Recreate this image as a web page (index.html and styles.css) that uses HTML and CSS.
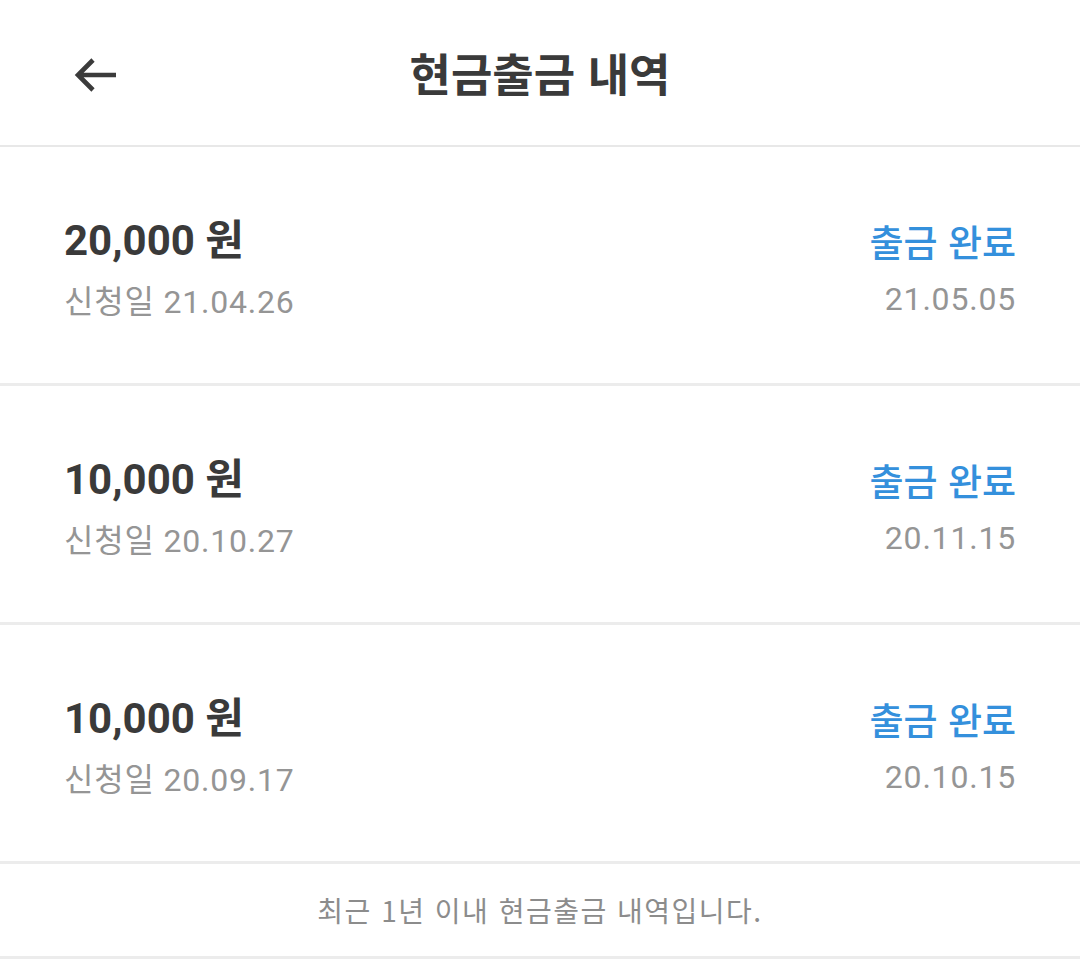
FILE: index.html
```html
<!DOCTYPE html>
<html lang="ko">
<head>
<meta charset="utf-8">
<title>현금출금 내역</title>
<link rel="stylesheet" href="styles.css">
</head>
<body>
<div class="page">
  <header class="topbar">
    <div class="back">
      <svg class="back-icon" width="44" height="34" viewBox="0 0 44 34">
        <path d="M43 17H5M20 2L5 17l15 15" fill="none" stroke="#3b3b3b" stroke-width="4.6" stroke-linecap="butt" stroke-linejoin="miter"/>
      </svg>
    </div>
    <h1 class="title">현금출금 내역</h1>
    <div class="spacer"></div>
  </header>

  <ul class="list">
    <li class="row">
      <div class="left">
        <div class="amount">20,000 원</div>
        <div class="sub">신청일 21.04.26</div>
      </div>
      <div class="right">
        <div class="status">출금 완료</div>
        <div class="date">21.05.05</div>
      </div>
    </li>
    <li class="row">
      <div class="left">
        <div class="amount">10,000 원</div>
        <div class="sub">신청일 20.10.27</div>
      </div>
      <div class="right">
        <div class="status">출금 완료</div>
        <div class="date">20.11.15</div>
      </div>
    </li>
    <li class="row">
      <div class="left">
        <div class="amount">10,000 원</div>
        <div class="sub">신청일 20.09.17</div>
      </div>
      <div class="right">
        <div class="status">출금 완료</div>
        <div class="date">20.10.15</div>
      </div>
    </li>
  </ul>

  <footer class="notice">최근 1년 이내 현금출금 내역입니다.</footer>
</div>
</body>
</html>
```

FILE: styles.css
```css
html, body {
  margin: 0;
  padding: 0;
  background: #ffffff;
}

body {
  font-family: Roboto, "Noto Sans CJK KR", "Noto Sans", sans-serif;
  color: #3a3a3a;
}

.page {
  width: 1080px;
}

.topbar {
  height: 145px;
  border-bottom: 2px solid #e8e8e8;
  display: grid;
  grid-template-columns: 1fr auto 1fr;
  align-items: center;
}

.back {
  padding-left: 73px;
  display: flex;
  align-items: center;
  padding-top: 4px;
}

.back-icon {
  display: block;
}

.title {
  margin: 0;
  font-family: "Noto Sans CJK KR", sans-serif;
  font-size: 45px;
  font-weight: 700;
  color: #3a3a3a;
  line-height: 1;
  padding-top: 0;
}

.list {
  list-style: none;
  margin: 0;
  padding: 0;
}

.row {
  height: 239px;
  box-sizing: border-box;
  border-bottom: 3px solid #ececec;
  padding: 8px 64px 0 64px;
  display: flex;
  justify-content: space-between;
  align-items: center;
}

.left, .right {
  display: flex;
  flex-direction: column;
}

.right {
  align-items: flex-end;
}

.amount {
  font-family: Roboto, "Noto Sans CJK KR", sans-serif;
  font-size: 42px;
  font-weight: 700;
  line-height: 50px;
  color: #3a3a3a;
}

.sub {
  margin-top: 16px;
  font-family: Roboto, "Noto Sans CJK KR", sans-serif;
  font-size: 32px;
  letter-spacing: 0.8px;
  line-height: 40px;
  color: #959595;
}

.status {
  font-family: "Noto Sans CJK KR", sans-serif;
  font-size: 37px;
  font-weight: 500;
  line-height: 44px;
  color: #3490dc;
}

.date {
  margin-top: 16px;
  font-family: Roboto, sans-serif;
  font-size: 32px;
  letter-spacing: 0.8px;
  line-height: 40px;
  color: #959595;
}

.notice {
  height: 92px;
  border-bottom: 3px solid #ececec;
  display: flex;
  align-items: center;
  justify-content: center;
  font-family: "Noto Sans CJK KR", sans-serif;
  font-size: 28px;
  letter-spacing: 1.5px;
  color: #8c8c8c;
}
```
